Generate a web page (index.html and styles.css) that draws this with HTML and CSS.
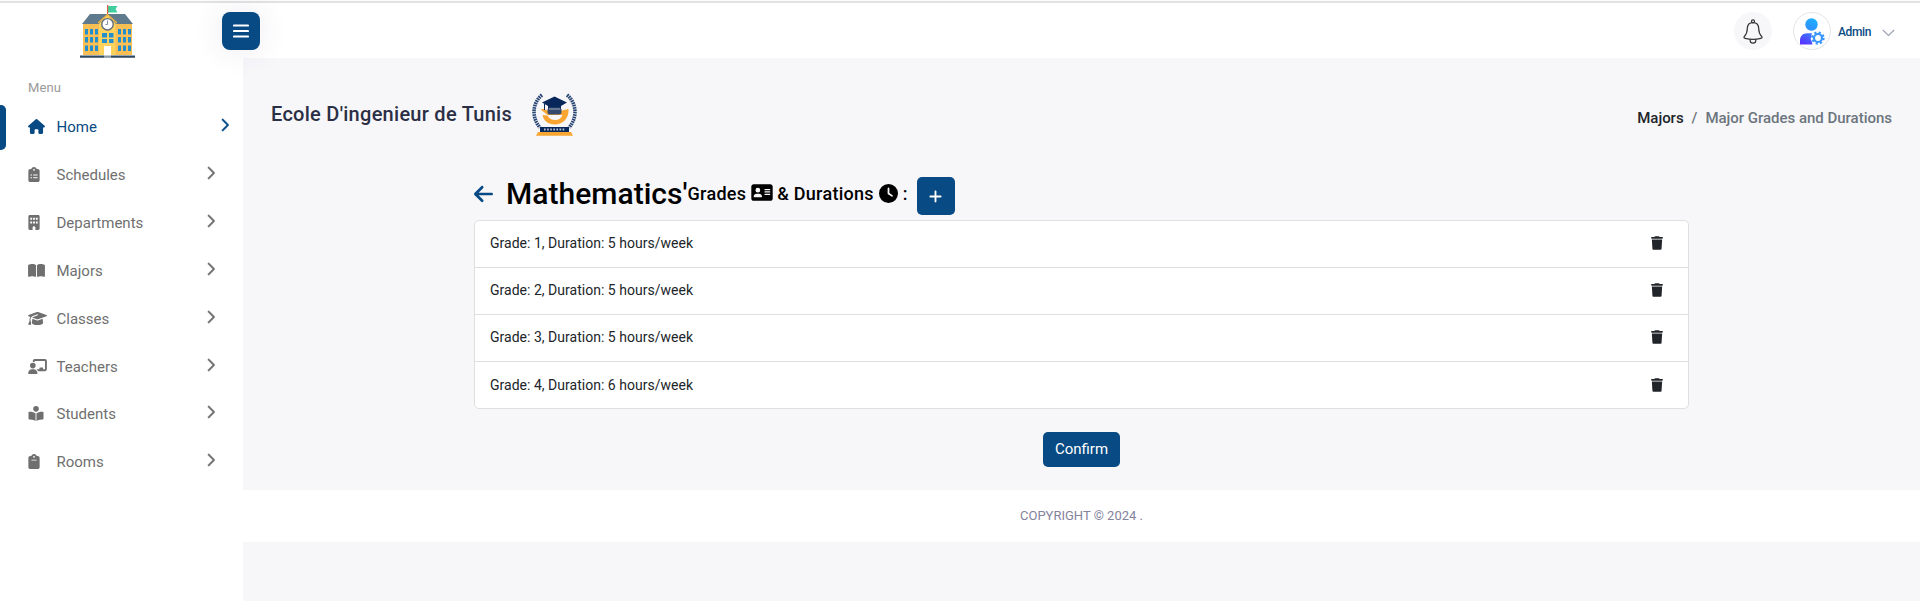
FILE: index.html
```html
<!DOCTYPE html>
<html lang="en">
<head>
<meta charset="utf-8">
<title>Major Grades and Durations</title>
<link rel="stylesheet" href="styles.css">
</head>
<body>
<svg class="defs" width="0" height="0" aria-hidden="true">
  <defs>
    <symbol id="chev" viewBox="0 0 320 512"><path d="M310.6 233.4c12.5 12.5 12.5 32.8 0 45.3l-192 192c-12.5 12.5-32.8 12.5-45.3 0s-12.5-32.8 0-45.3L242.7 256 73.4 86.6c-12.5-12.5-12.5-32.8 0-45.3s32.8-12.5 45.3 0l192 192z"/></symbol>
    <symbol id="trash" viewBox="0 0 448 512"><path d="M135.2 17.7L128 32H32C14.3 32 0 46.3 0 64S14.3 96 32 96H416c17.7 0 32-14.3 32-32s-14.3-32-32-32H320l-7.2-14.3C307.4 6.8 296.3 0 284.2 0H163.8c-12.1 0-23.2 6.8-28.6 17.7zM416 128H32L53.2 467c1.6 25.3 22.6 45 47.9 45H346.9c25.3 0 46.3-19.7 47.9-45L416 128z"/></symbol>
    <linearGradient id="userfill" x1="0.7" y1="0" x2="0.2" y2="1"><stop offset="0" stop-color="#1fb0ff"/><stop offset="1" stop-color="#2f8cff"/></linearGradient>
    <linearGradient id="bodyfill" x1="0.8" y1="0" x2="0.2" y2="1"><stop offset="0" stop-color="#3d77ff"/><stop offset="1" stop-color="#5a30ff"/></linearGradient>
  </defs>
</svg>
<div class="topline"></div>
<div class="shell">
  <aside class="sidebar">
    <div class="brand">
      <svg width="55" height="53" viewBox="0 0 55 53">
        <path d="M28 1h9.500l-2 3 2 3.500h-9.500z" fill="#3fcf9f"/>
        <path d="M27 0h1.200v12h-1.200z" fill="#d9603f"/>
        <path d="M10 9h35l8 10H2z" fill="#5f7a8c"/>
        <path d="M3 19h49v31H3z" fill="#f9bf55"/>
        <path d="M19 18.500L27.500 10l8 8.500V50H19z" fill="#fdd35e"/>
        <path d="M18 18l9.500-8.500L37 18" fill="none" stroke="#f3b740" stroke-width="1.300"/>
        <circle cx="27.500" cy="19.300" r="5.700" fill="#fff" stroke="#626f7b" stroke-width="1.400"/>
        <path d="M27.500 15.500v4h-2" fill="none" stroke="#8495a3" stroke-width="1"/>
        <g fill="#238fce">
          <path d="M5 24h3v5.500H5zM10 24h3v5.500h-3zM15 24h3v5.500h-3zM5 32h3v5.500H5zM10 32h3v5.500h-3zM15 32h3v5.500h-3zM5 40.500h3V46H5zM10 40.500h3V46h-3zM15 40.500h3V46h-3z"/>
          <path d="M38 24h3v5.500h-3zM43 24h3v5.500h-3zM48 24h3v5.500h-3zM38 32h3v5.500h-3zM43 32h3v5.500h-3zM48 32h3v5.500h-3zM38 40.500h3V46h-3zM43 40.500h3V46h-3zM48 40.500h3V46h-3z"/>
          <path d="M22 28h5v4.500h-5zM29 28h4.500v4.500H29zM22 34h5v4h-5zM29 34h4.500v4H29z"/>
        </g>
        <path d="M24 41h7v10h-7z" fill="#fff"/>
        <path d="M0 50.500h24v2.300H0zM31 50.500h24v2.300H31z" fill="#2f4a60"/>
        <path d="M24 50.500h7v2.300h-7z" fill="#8b9aa5"/>
      </svg>
    </div>
    <div class="menu-title">Menu</div>
    <nav class="menu">
      <a class="item active">
        <span class="ico"><svg width="17" height="15" viewBox="0 0 576 512"><path d="M575.8 255.5c0 18-15 32.100-32 32.100h-32l.7 160.200c0 2.700-.2 5.400-.5 8.100V472c0 22.100-17.900 40-40 40H392c-22.100 0-40-17.900-40-40V384c0-17.700-14.300-32-32-32H256c-17.700 0-32 14.300-32 32v88c0 22.100-17.900 40-40 40H104c-22.100 0-40-17.900-40-40V287.600H32c-18 0-32-14-32-32.100c0-9 3-17 10-24L266.400 8c7-7 15-8 22-8s15 2 21 7L564.800 231.500c8 7 12 15 11 24z"/></svg></span>
        <span class="label">Home</span><svg class="chev" width="9" height="14"><use href="#chev"/></svg>
      </a>
      <a class="item">
        <span class="ico"><svg width="12" height="15" viewBox="0 0 384 512"><path fill-rule="evenodd" d="M192 0c-41.800 0-77.400 26.700-90.500 64H64C28.700 64 0 92.700 0 128V448c0 35.300 28.700 64 64 64H320c35.300 0 64-28.700 64-64V128c0-35.300-28.700-64-64-64H282.500C269.400 26.700 233.800 0 192 0zm0 64a32 32 0 1 1 0 64 32 32 0 1 1 0-64zM72 272a24 24 0 1 1 48 0 24 24 0 1 1-48 0zm104-16H304c8.800 0 16 7.200 16 16s-7.200 16-16 16H176c-8.800 0-16-7.200-16-16s7.200-16 16-16zM72 368a24 24 0 1 1 48 0 24 24 0 1 1-48 0zm88 0c0-8.800 7.200-16 16-16H304c8.800 0 16 7.200 16 16s-7.200 16-16 16H176c-8.800 0-16-7.200-16-16z"/></svg></span>
        <span class="label">Schedules</span><svg class="chev" width="9" height="14"><use href="#chev"/></svg>
      </a>
      <a class="item">
        <span class="ico"><svg width="12" height="15" viewBox="0 0 384 512"><path fill-rule="evenodd" d="M48 0C21.500 0 0 21.500 0 48V464c0 26.500 21.500 48 48 48h96V432c0-26.500 21.500-48 48-48s48 21.500 48 48v80h96c26.500 0 48-21.500 48-48V48c0-26.500-21.500-48-48-48zM64 96h64v64H64zM160 96h64v64h-64zM256 96h64v64h-64zM64 224h64v64H64zM160 224h64v64h-64zM256 224h64v64h-64z"/></svg></span>
        <span class="label">Departments</span><svg class="chev" width="9" height="14"><use href="#chev"/></svg>
      </a>
      <a class="item">
        <span class="ico"><svg width="17" height="15" viewBox="0 0 576 512"><path d="M249.600 471.500c10.800 3.800 22.400-4.100 22.400-15.500V78.600c0-4.200-1.600-8.400-5-11C247.400 52 202.400 32 144 32C93.500 32 46.300 45.300 18.100 56.100C6.800 60.500 0 71.700 0 83.800V454.100c0 11.900 12.800 20.200 24.100 16.500C55.600 460.100 105.500 448 144 448c33.900 0 79 14 105.600 23.500zm76.800 0C353 462 398.100 448 432 448c38.500 0 88.400 12.100 119.900 22.600c11.300 3.800 24.100-4.600 24.100-16.500V83.800c0-12.100-6.800-23.300-18.100-27.600C529.700 45.300 482.500 32 432 32c-58.400 0-103.400 20-123 35.600c-3.300 2.600-5 6.800-5 11V456c0 11.400 11.700 19.300 22.400 15.500z"/></svg></span>
        <span class="label">Majors</span><svg class="chev" width="9" height="14"><use href="#chev"/></svg>
      </a>
      <a class="item">
        <span class="ico"><svg width="19" height="15" viewBox="0 0 640 512"><path d="M320 32c-8.100 0-16.100 1.400-23.700 4.100L15.800 137.400C6.300 140.900 0 149.900 0 160s6.300 19.100 15.800 22.600l57.900 20.900C57.300 229.300 48 259.800 48 291.900v28.100c0 28.400-10.800 57.700-22.300 80.800c-6.500 13-13.900 25.800-22.500 37.600C0 442.700-.9 448.300 .9 453.400s6 8.900 11.200 10.200l64 16c4.200 1.100 8.700 .3 12.400-2s6.300-6.100 7.100-10.400c8.600-42.800 4.300-81.200-2.100-108.700C90.300 344.300 86 329.800 80 316.500V291.900c0-30.200 10.200-58.700 27.900-81.500c12.900-15.500 29.600-28 49.200-35.700l157-61.700c8.200-3.200 17.500 .8 20.700 9s-.8 17.500-9 20.700l-157 61.700c-12.400 4.900-23.300 12.400-32.200 21.600l159.600 57.600c7.600 2.700 15.600 4.100 23.700 4.100s16.100-1.400 23.700-4.100L624.200 182.600c9.500-3.400 15.800-12.500 15.800-22.600s-6.300-19.100-15.800-22.600L343.700 36.100C336.100 33.400 328.100 32 320 32zM128 408c0 35.300 86 72 192 72s192-36.700 192-72L496.700 262.600 354.500 314c-11.100 4-22.800 6-34.500 6s-23.500-2-34.500-6L143.300 262.600 128 408z"/></svg></span>
        <span class="label">Classes</span><svg class="chev" width="9" height="14"><use href="#chev"/></svg>
      </a>
      <a class="item">
        <span class="ico"><svg width="19" height="15" viewBox="0 0 640 512"><path d="M160 64c0-35.300 28.700-64 64-64H576c35.300 0 64 28.700 64 64V352c0 35.300-28.700 64-64 64H336.800c-11.800-25.500-29.900-47.500-52.400-64H384V320c0-17.700 14.300-32 32-32h64c17.700 0 32 14.300 32 32v32h64V64L224 64v49.100C205.200 102.200 183.300 96 160 96V64zm0 64a96 96 0 1 1 0 192 96 96 0 1 1 0-192zM133.300 352h53.300C260.300 352 320 411.700 320 485.300c0 14.700-11.900 26.700-26.700 26.700H26.700C11.900 512 0 500.100 0 485.300C0 411.700 59.700 352 133.300 352z"/></svg></span>
        <span class="label">Teachers</span><svg class="chev" width="9" height="14"><use href="#chev"/></svg>
      </a>
      <a class="item">
        <span class="ico"><svg width="16" height="15" viewBox="0 0 512 512"><path d="M160 96a96 96 0 1 1 192 0A96 96 0 1 1 160 96zm80 152V512l-48.400-24.200c-20.900-10.400-43.500-17-66.800-19.300l-96-9.600C12.500 457.200 0 443.500 0 427V224c0-17.700 14.300-32 32-32H62.300c63.600 0 125.600 19.600 177.700 56zm32 264V248c52.100-36.400 114.100-56 177.700-56H480c17.700 0 32 14.300 32 32V427c0 16.400-12.500 30.200-28.800 31.800l-96 9.600c-23.200 2.300-45.900 8.900-66.800 19.300L272 512z"/></svg></span>
        <span class="label">Students</span><svg class="chev" width="9" height="14"><use href="#chev"/></svg>
      </a>
      <a class="item">
        <span class="ico"><svg width="12" height="15" viewBox="0 0 384 512"><path fill-rule="evenodd" d="M192 0c-41.800 0-77.400 26.700-90.500 64H64C28.700 64 0 92.700 0 128V448c0 35.300 28.700 64 64 64H320c35.300 0 64-28.700 64-64V128c0-35.300-28.700-64-64-64H282.500C269.400 26.700 233.800 0 192 0zm0 64a32 32 0 1 1 0 64 32 32 0 1 1 0-64zM112 192H272c8.800 0 16 7.200 16 16s-7.200 16-16 16H112c-8.800 0-16-7.200-16-16s7.200-16 16-16z"/></svg></span>
        <span class="label">Rooms</span><svg class="chev" width="9" height="14"><use href="#chev"/></svg>
      </a>
    </nav>
  </aside>
  <div class="main">
    <header class="header">
      <button class="toggle"><svg width="16" height="14" viewBox="0 0 16 14"><path d="M1 1.500h14M1 7h14M1 12.500h14" stroke="#fff" stroke-width="2.200" stroke-linecap="round"/></svg></button>
      <div class="account">
        <span class="bell"><svg width="20" height="25" viewBox="0 0 20 25" fill="none" stroke="#333" stroke-width="1.200">
          <circle cx="10" cy="2.300" r="1.500"/>
          <path d="M10 3.600C6 3.600 4.400 6.500 4.300 9.500C4.200 14 3.500 15.300 1.500 17.200C.6 18.200 .8 19 2.200 19.300C7 20.500 13 20.500 17.800 19.300C19.200 19 19.400 18.200 18.500 17.200C16.500 15.300 15.800 14 15.700 9.500C15.600 6.500 14 3.600 10 3.600z"/>
          <path d="M7.200 20.200v1.300a2.800 2.700 0 0 0 5.600 0v-1.300"/>
        </svg></span>
        <span class="avatar"><svg width="26" height="27" viewBox="0 0 26 27">
          <circle cx="12.500" cy="6.500" r="6.200" fill="url(#userfill)"/>
          <path d="M1 26.500V22.500C1 18 4 15.200 8 15.200h5.300c-1.200 1.300-1 2.500-.5 3.500l-1.300 1.800 1.200 3 .8 3z" fill="url(#bodyfill)"/>
          <circle cx="19" cy="20" r="4" fill="none" stroke="#3594fb" stroke-width="2.200"/>
          <circle cx="19" cy="20" r="5.700" fill="none" stroke="#3594fb" stroke-width="1.900" stroke-dasharray="2.200 2.277"/>
        </svg></span>
        <span class="name">Admin</span>
        <svg class="down" width="13" height="8" viewBox="0 0 13 8"><path d="M.8 1l5.700 5.500L12.200 1" fill="none" stroke="#9aa0b4" stroke-width="1.100"/></svg>
      </div>
    </header>
    <section class="content">
      <div class="pagehead">
        <h1 class="school">Ecole D'ingenieur de Tunis</h1>
        <svg class="crest" width="46" height="43" viewBox="0 0 46 43">
          <g fill="none" stroke="#2a4673" stroke-width="3.600" stroke-dasharray="1.700 .7">
            <path d="M10 2C0 10-.5 25 8 34.500"/><path d="M35 2C45 10 45.500 25 37 34.500"/>
          </g>
          <path d="M8.500 16.500c2-1 5-.5 7 1h14.500l6.500-1.500c.8 9-5.500 15.500-13.500 15.500-7 0-11.500-4-12.500-9.500l5 .5c1.500 3 4.500 4.500 7.500 4.500 4 0 6.500-2 7.500-5H15.500c-2-1.500-4-3.500-7-5.500z" fill="#f9a531"/>
          <path d="M22.500 3.500L35 9.500l-6 3.400v3.600c-3.500-1.700-9.500-1.700-13 0v-3.600L10 9.500z" fill="#08285c"/>
          <path d="M12.500 11v6" stroke="#08285c" stroke-width="1"/>
          <rect x="15.500" y="14.500" width="14" height="7" rx="2.500" fill="#34496d"/>
          <path d="M17 16h11" stroke="#aab4c4" stroke-width=".9"/>
          <path d="M8 34h29v5H8z" fill="#08285c"/>
          <path d="M12 36.500h21" stroke="#b3bdcd" stroke-width="1.800" stroke-dasharray="1.700 1.400"/>
          <path d="M4 42.800l2-3.800h33l2 3.800z" fill="#f9a531"/>
        </svg>
        <div class="crumbs"><span class="crumb">Majors</span><span class="sep">/</span><span class="current">Major Grades and Durations</span></div>
      </div>
      <div class="panel">
        <div class="titlebar">
          <svg class="back" width="19" height="22" viewBox="0 0 448 512"><path d="M9.400 233.400c-12.500 12.500-12.500 32.800 0 45.300l160 160c12.500 12.500 32.800 12.500 45.300 0s12.500-32.800 0-45.300L109.200 288 416 288c17.700 0 32-14.300 32-32s-14.300-32-32-32l-306.700 0L214.600 118.600c12.500-12.500 12.500-32.800 0-45.300s-32.800-12.500-45.300 0l-160 160z"/></svg>
          <h2 class="major">Mathematics'</h2>
          <h3 class="sub"><span>Grades</span><svg class="card" width="22" height="19" viewBox="0 0 576 512"><path fill-rule="evenodd" d="M64 32C28.700 32 0 60.700 0 96V416c0 35.300 28.700 64 64 64H512c35.300 0 64-28.700 64-64V96c0-35.300-28.700-64-64-64H64zm80 256h64c44.200 0 80 35.800 80 80c0 8.800-7.200 16-16 16H80c-8.800 0-16-7.200-16-16c0-44.200 35.800-80 80-80zm-32-96a64 64 0 1 1 128 0 64 64 0 1 1-128 0zm256-32H496a16 16 0 0 1 0 32H368a16 16 0 0 1 0-32zm0 64H496a16 16 0 0 1 0 32H368a16 16 0 0 1 0-32zm0 64H496a16 16 0 0 1 0 32H368a16 16 0 0 1 0-32z"/></svg><span>&amp; Durations</span><svg class="clock" width="19" height="19" viewBox="0 0 512 512"><path fill-rule="evenodd" d="M256 0a256 256 0 1 1 0 512A256 256 0 1 1 256 0zM232 120V256c0 8 4 15.500 10.700 20l96 64c11 7.400 25.900 4.400 33.300-6.700s4.400-25.900-6.700-33.300L280 243.200V120c0-13.300-10.700-24-24-24s-24 10.700-24 24z"/></svg><span>:</span></h3>
          <button class="add"><svg width="13" height="15" viewBox="0 0 448 512"><path fill="#fff" d="M256 80c0-17.700-14.300-32-32-32s-32 14.300-32 32V224H48c-17.700 0-32 14.300-32 32s14.300 32 32 32H192V432c0 17.700 14.300 32 32 32s32-14.300 32-32V288H400c17.700 0 32-14.300 32-32s-14.300-32-32-32H256V80z"/></svg></button>
        </div>
        <ul class="list">
          <li class="row"><span>Grade: 1, Duration: 5 hours/week</span><svg width="12" height="14"><use href="#trash"/></svg></li>
          <li class="row"><span>Grade: 2, Duration: 5 hours/week</span><svg width="12" height="14"><use href="#trash"/></svg></li>
          <li class="row"><span>Grade: 3, Duration: 5 hours/week</span><svg width="12" height="14"><use href="#trash"/></svg></li>
          <li class="row"><span>Grade: 4, Duration: 6 hours/week</span><svg width="12" height="14"><use href="#trash"/></svg></li>
        </ul>
        <button class="confirm">Confirm</button>
      </div>
    </section>
    <footer class="footer">COPYRIGHT © 2024 .</footer>
  </div>
</div>
</body>
</html>
```
FILE: styles.css
```css
* { box-sizing: border-box; }
body { margin: 0; height: 601px; overflow: hidden; background: #f7f7fa; font-family: Roboto, "Liberation Sans", sans-serif; color: #212529; }
h1, h2, h3 { margin: 0; font-weight: 500; }
button { border: 0; padding: 0; font-family: inherit; }
svg { display: block; flex: none; }
.defs { position: absolute; }
.topline { height: 3px; background: #e1e3e1; border-top: 1px solid #fbfbfb; }
.shell { display: flex; height: 598px; }
.sidebar { width: 243px; flex: none; background: #fff; }
.brand { padding: 2px 0 0 80px; height: 55px; }
.menu-title { padding: 22px 0 0 28px; height: 45px; font-size: 13px; letter-spacing: .1px; line-height: 16px; color: #999; }
.menu { display: flex; flex-direction: column; }
.item { display: flex; align-items: center; height: 47.84px; padding-left: 28px; color: #6f6f6f; fill: #6f6f6f; font-size: 15px; }
.ico { width: 28.5px; flex: none; }
.label { width: 147px; margin-top: 1px; }
.item .chev { margin: -3px 0 0 2px; stroke: currentColor; stroke-width: 16px; }
.item.active { position: relative; color: #084a83; fill: #084a83; }
.item.active::before { content: ""; position: absolute; left: 0; top: 2px; width: 6px; height: 45px; background: #084a83; border-radius: 0 5px 5px 0; }
.active .label { width: 161px; }
.main { flex: 1; min-width: 0; }
.header { display: flex; align-items: center; justify-content: space-between; height: 55px; background: #fff; padding: 1px 25px 0 0; }
.toggle { display: flex; align-items: center; justify-content: center; position: relative; width: 38px; height: 38px; margin-left: -21px; border-radius: 8px; background: #084a83; box-shadow: 0 0 30px rgba(60, 60, 130, .1); }
.account { display: flex; align-items: center; }
.bell { display: flex; align-items: center; justify-content: center; width: 38px; height: 38px; border-radius: 50%; background: #f7f7fa; margin-right: 21px; }
.avatar { display: flex; align-items: center; justify-content: center; width: 38px; height: 38px; border: 1px solid #e5e5e8; border-radius: 50%; margin-right: 7px; }
.name { font-size: 12px; font-weight: 500; letter-spacing: -.35px; color: #084a83; width: 44px; margin-top: 2px; }
.down { margin-top: 3px; }
.content { height: 432px; padding: 0 28px; background: #f7f7fa; }
.pagehead { display: flex; align-items: center; height: 112px; }
.school { font-size: 20px; letter-spacing: .27px; color: #2b2f45; }
.crest { margin: 1px 0 0 20px; }
.crumbs { display: flex; margin-left: auto; padding-top: 8px; font-size: 15px; font-weight: 500; letter-spacing: -.02px; }
.sep { margin: 0 8px; color: #6c757d; }
.current { color: #6c757d; }
.panel { width: 1215px; margin-left: 203px; display: flex; flex-direction: column; }
.titlebar { display: flex; align-items: center; height: 50px; color: #000; }
.back { fill: #084a83; margin: -3px 13px 0 0; }
.major { font-size: 30px; letter-spacing: .03px; margin-top: -3px; }
.sub { display: flex; align-items: center; font-size: 18px; letter-spacing: .27px; margin-top: -4px; }
.card { margin: -1px 4px 0 5px; }
.clock { margin: 0 5px; }
.add { display: flex; align-items: center; justify-content: center; width: 38px; height: 38px; margin: 2px 0 0 9px; border-radius: 5px; background: #084a83; }
.list { margin: 0; padding: 0; list-style: none; background: #fff; border: 1px solid #dfdfdf; border-radius: 5px; }
.row { display: flex; align-items: center; justify-content: space-between; height: 47px; padding: 0 25px 2px 15px; font-size: 14px; font-weight: 400; letter-spacing: .02px; border-bottom: 1px solid #dfdfdf; fill: #212529; }
.row:last-child { border-bottom: 0; height: 46px; padding-bottom: 1px; }
.confirm { align-self: center; width: 77px; height: 35px; margin-top: 23px; padding-bottom: 2px; border-radius: 5px; background: #084a83; color: #fff; font-size: 15px; }
.footer { display: flex; align-items: center; justify-content: center; height: 52px; padding-bottom: 2px; background: #fff; font-size: 13px; color: #83839c; }
```
